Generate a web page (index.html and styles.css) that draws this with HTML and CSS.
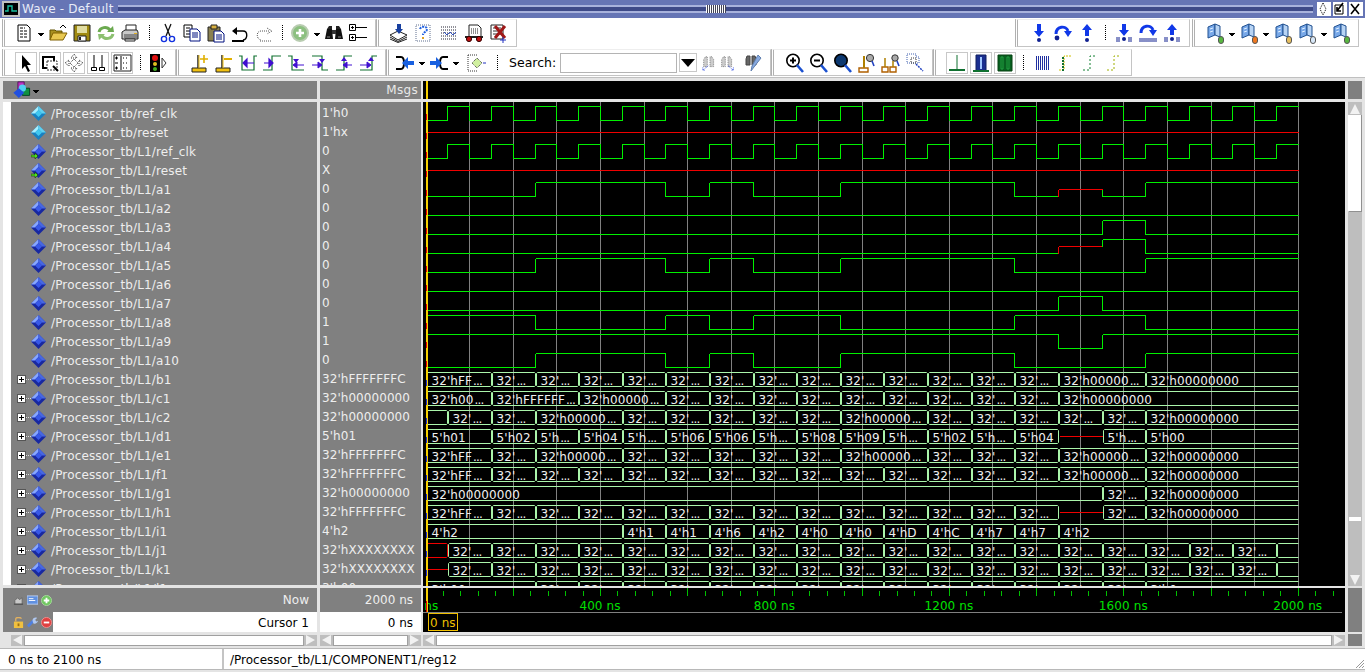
FILE: index.html
```html
<!DOCTYPE html>
<html lang="en">
<head>
    <meta charset="UTF-8">
    <title>Wave - Default</title>
    <link rel="stylesheet" href="styles.css">
</head>
<body>
<svg class="sprites" xmlns="http://www.w3.org/2000/svg">
    <!-- toolbar row 1 -->
    <symbol id="i-new" viewBox="0 0 20 20"><path d="M4 2h9l3 3v13H4z" fill="#fff" stroke="#000"/><path d="M6 5h5M6 8h8M6 11h8M6 14h8" stroke="#000" stroke-dasharray="3 1"/></symbol>
    <symbol id="i-open" viewBox="0 0 20 20"><path d="M2 17V7h5l1 1h6v3" fill="#a89020" stroke="#605000"/><path d="M2 17l3-7h14l-4 7z" fill="#e8c850" stroke="#806000"/><path d="M12 5l3-3 3 3" fill="none" stroke="#000"/></symbol>
    <symbol id="i-save" viewBox="0 0 20 20"><path d="M2 2h16v16H2z" fill="#a08a10" stroke="#222"/><path d="M5 3h10v7H5z" fill="#e0dca0"/><path d="M6 13h8v5H6z" fill="#fff" stroke="#222"/><path d="M7 14h2v3H7z" fill="#222"/></symbol>
    <symbol id="i-reload" viewBox="0 0 20 20"><path d="M3 9c1-5 8-6 11-2" fill="none" stroke="#6caa50" stroke-width="3"/><path d="M11 9l7 0-1-6z" fill="#6caa50"/><path d="M17 11c-1 5-8 6-11 2" fill="none" stroke="#8cc070" stroke-width="3"/><path d="M9 11l-7 0 1 6z" fill="#8cc070"/></symbol>
    <symbol id="i-print" viewBox="0 0 20 20"><path d="M6 2h10v6H6z" fill="#fff" stroke="#222"/><path d="M2 9l3-2h12l1 2v7H2z" fill="#c8c8c8" stroke="#222"/><path d="M4 12h14M4 14h14" stroke="#444"/><path d="M5 16h10v2H5z" fill="#fff" stroke="#222"/><path d="M14 10h3v1h-3z" fill="#e0b020"/></symbol>
    <symbol id="i-cut" viewBox="0 0 20 20"><path d="M7 1l5 12M13 1L8 13" stroke="#111" stroke-width="1.3"/><circle cx="6" cy="16" r="2.6" fill="none" stroke="#1030e0" stroke-width="1.4"/><circle cx="14" cy="16" r="2.6" fill="none" stroke="#1030e0" stroke-width="1.4"/></symbol>
    <symbol id="i-copy" viewBox="0 0 20 20"><path d="M2 2h8v12H2z" fill="#fff" stroke="#000"/><path d="M4 5h4M4 8h4M4 11h4" stroke="#000"/><path d="M8 6h7l3 3v9H8z" fill="#fff" stroke="#001080"/><path d="M10 10h6M10 12h6M10 14h6" stroke="#001080"/></symbol>
    <symbol id="i-paste" viewBox="0 0 20 20"><path d="M2 4h12v14H2z" fill="#8a8050" stroke="#222"/><path d="M5 2h6v4H5z" fill="#d8b040" stroke="#222"/><path d="M8 8h7l3 3v8H8z" fill="#fff" stroke="#001080"/><path d="M10 12h6M10 14h6M10 16h6" stroke="#001080"/></symbol>
    <symbol id="i-undo" viewBox="0 0 20 20"><path d="M5 8h8c5 0 5 8 0 9" fill="none" stroke="#000" stroke-width="1.4"/><path d="M7 4v8L2 8z" fill="#000"/><path d="M2 18h12" stroke="#000" stroke-width="2"/></symbol>
    <symbol id="i-redo" viewBox="0 0 20 20"><path d="M15 8H7c-5 0-5 8 0 9" fill="none" stroke="#555" stroke-dasharray="1 1"/><path d="M13 5l5 3-5 3" fill="none" stroke="#555" stroke-dasharray="1 1"/><path d="M6 18h12" stroke="#555" stroke-dasharray="1 1"/></symbol>
    <symbol id="i-add" viewBox="0 0 20 20"><circle cx="10" cy="10" r="8" fill="#8cc080" stroke="#b8ccb0" stroke-width="2"/><path d="M10 6v8M6 10h8" stroke="#fff" stroke-width="2.6"/></symbol>
    <symbol id="i-binoc" viewBox="0 0 20 20"><path d="M3 6l2-3h3v3zM12 6V3h3l2 3z" fill="#222"/><path d="M1 16l2-10h5l1 10H1zM11 16l1-10h5l2 10h-8z" fill="#111"/><path d="M8 7h4v4H8z" fill="#333"/><path d="M3 14h3M14 14h3" stroke="#888"/></symbol>
    <symbol id="i-tree" viewBox="0 0 20 20"><path d="M1.500 1.500h6v6h-6zM1.500 11.500h6v6h-6z" fill="#fff" stroke="#000"/><path d="M3 4.500h3M4.500 3v3M3 14.500h3M4.500 13v3M8 4.500h11M8 14.500h11" stroke="#000"/></symbol>
    <symbol id="i-load" viewBox="0 0 20 20"><path d="M1 12l8-4 9 4-9 5z" fill="#fff" stroke="#222"/><path d="M1 14l8 4.500 9-4.500M1 16l8 3.500 9-3.500" fill="none" stroke="#222"/><path d="M8 1h4v5h2l-4 5-4-5h2z" fill="#1840a0"/></symbol>
    <symbol id="i-help" viewBox="0 0 20 20"><path d="M2 2h14v16H2z" fill="#fff" stroke="#607090" stroke-dasharray="1 1"/><path d="M6 6c1-3 7-3 7 0 0 3-4 3-4 6" fill="none" stroke="#2060e0" stroke-width="2" stroke-dasharray="2 1"/><path d="M8 14h2v2H8z" fill="#e0a020"/></symbol>
    <symbol id="i-grid" viewBox="0 0 20 20"><path d="M2 4h16M2 7h16M2 10h16M2 13h16M2 16h16" stroke="#223" stroke-dasharray="1 1"/><path d="M5 9l3 3 3-3M11 9l3 3 3-3" fill="none" stroke="#3050c0"/></symbol>
    <symbol id="i-cart" viewBox="0 0 20 20"><path d="M5 2h9l3 3v9H5z" fill="#fff" stroke="#222"/><path d="M7 6h7M7 8h7M7 10h7" stroke="#222" stroke-dasharray="1 1"/><path d="M1 14h18" stroke="#222" stroke-width="2"/><circle cx="5" cy="16" r="2.600" fill="#c01010" stroke="#300"/><circle cx="15" cy="16" r="2.600" fill="#c01010" stroke="#300"/></symbol>
    <symbol id="i-del" viewBox="0 0 20 20"><path d="M2 2h12v14H2z" fill="#fff" stroke="#222"/><path d="M4 5h8M4 8h8M4 11h8" stroke="#333"/><path d="M6 3l10 12M16 3L6 15" stroke="#a01818" stroke-width="3"/><path d="M14 14v6M11 17h6" stroke="#2030c0"/></symbol>
    <!-- step buttons -->
    <symbol id="i-stepin" viewBox="0 0 20 20"><path d="M8 1h4v7h3l-5 6-5-6h3z" fill="#1038e8"/><circle cx="10" cy="17" r="2" fill="#102090"/></symbol>
    <symbol id="i-stepover" viewBox="0 0 20 20"><path d="M3 11C3 3 13 2 15 8" fill="none" stroke="#1038e8" stroke-width="3"/><path d="M11 8h8l-4 6z" fill="#1038e8"/><circle cx="4" cy="15" r="2.400" fill="#102090"/></symbol>
    <symbol id="i-stepout" viewBox="0 0 20 20"><path d="M10 1l5 6h-3v6H8V7H5z" fill="#1038e8"/><circle cx="10" cy="17" r="2" fill="#102090"/></symbol>
    <symbol id="i-stepin2" viewBox="0 0 20 20"><path d="M8 1h4v6h3l-5 6-5-6h3z" fill="#1038e8"/><path d="M3 14v5M5 14v5M15 14v5M17 14v5" stroke="#102090"/><circle cx="10" cy="16" r="2" fill="#102090"/></symbol>
    <symbol id="i-stepover2" viewBox="0 0 20 20"><path d="M3 10C3 2 13 1 15 7" fill="none" stroke="#1038e8" stroke-width="3"/><path d="M11 7h8l-4 6z" fill="#1038e8"/><path d="M2 15v4M4 15v4M6 15v4M8 15v4M10 15v4M12 15v4M14 15v4M16 15v4M18 15v4" stroke="#102090"/></symbol>
    <symbol id="i-stepout2" viewBox="0 0 20 20"><path d="M10 1l5 6h-3v5H8V7H5z" fill="#1038e8"/><path d="M3 14v5M5 14v5M15 14v5M17 14v5" stroke="#102090"/><circle cx="10" cy="16" r="2" fill="#102090"/></symbol>
    <!-- bookmark tools -->
    <symbol id="i-book" viewBox="0 0 20 20"><path d="M3 4l7-3v11l-7 3z" fill="#78a8e8" stroke="#205090"/><path d="M10 1l5 2v11l-5-2z" fill="#b8d4f4" stroke="#205090"/><path d="M5 6l3-1M5 9l3-1" stroke="#e0f0ff"/></symbol>
    <!-- cursor and search row -->
    <symbol id="i-arrow" viewBox="0 0 20 20"><path d="M6 2v14l3-3 3 6 2-1-3-6h4z" fill="#000"/></symbol>
    <symbol id="i-zoombox" viewBox="0 0 20 20"><path d="M3 4h11v11H3z" fill="none" stroke="#000" stroke-width="2"/><path d="M7 8h10v9H7z" fill="#fff" stroke="#333" stroke-dasharray="2 1"/><path d="M13 13l5 5" stroke="#000" stroke-width="2"/></symbol>
    <symbol id="i-move" viewBox="0 0 20 20"><path d="M10 1l3 4h-6zM10 19l3-4H7zM1 10l4-3v6zM19 10l-4-3v6z" fill="#fff" stroke="#333" stroke-dasharray="1 1"/><path d="M10 6l4 4-4 4-4-4z" fill="none" stroke="#333" stroke-dasharray="1 1"/></symbol>
    <symbol id="i-tbars" viewBox="0 0 20 20"><path d="M6 2v12M14 2v12" stroke="#000"/><path d="M3.500 14.500h5v3h-5zM11.500 14.500h5v3h-5z" fill="#fff" stroke="#000"/></symbol>
    <symbol id="i-list" viewBox="0 0 20 20"><path d="M2 2h17v16H2z" fill="#fff" stroke="#222"/><path d="M3 5h3M3 10h3M3 15h3M4.500 3.500v3M4.500 13.500v3" stroke="#000"/><path d="M9 3v14" stroke="#000"/><path d="M11 5h6M11 10h6M11 15h6" stroke="#000" stroke-dasharray="1 2"/></symbol>
    <symbol id="i-stop" viewBox="0 0 20 20"><path d="M2 1h10v18H2z" fill="#000"/><circle cx="7" cy="5" r="3" fill="#e01010"/><circle cx="7" cy="11" r="2" fill="#e0c020"/><circle cx="7" cy="16" r="2" fill="#40b020"/><path d="M14 5l4 5-4 5z" fill="#fff" stroke="#333"/></symbol>
    <symbol id="i-caddn" viewBox="0 0 20 20"><path d="M2 15h14v4H2z" fill="#f0c010" stroke="#222"/><path d="M8 15V2" stroke="#222" stroke-width="1.500"/><path d="M9 2v13" stroke="#f0c010"/><path d="M10 6h8M14 2v8" stroke="#e0b000" stroke-width="1.600"/></symbol>
    <symbol id="i-cdel" viewBox="0 0 20 20"><path d="M2 15h14v4H2z" fill="#f0c010" stroke="#222"/><path d="M8 15V2" stroke="#222" stroke-width="1.500"/><path d="M9 2v13" stroke="#f0c010"/><path d="M10 6h8" stroke="#e0b000" stroke-width="2"/></symbol>
    <symbol id="i-e1" viewBox="0 0 20 20"><path d="M1 3h3v14h12V3h3" fill="none" stroke="#107030" stroke-width="1.200"/><path d="M16 10H9M9 6l-4 4 4 4z" fill="#4010d0" stroke="#4010d0" stroke-width="1.200"/></symbol>
    <symbol id="i-e2" viewBox="0 0 20 20"><path d="M1 17h9V3h9" fill="none" stroke="#107030" stroke-width="1.200"/><path d="M2 10h6M7 6l4 4-4 4z" fill="#4010d0" stroke="#4010d0" stroke-width="1.200"/></symbol>
    <symbol id="i-e3" viewBox="0 0 20 20"><path d="M2 3h4v14h12" fill="none" stroke="#107030" stroke-width="1.200"/><path d="M18 12H9M11 9l-4 3 4 3z" fill="#4010d0" stroke="#4010d0"/><path d="M7 6l3 4 3-4z" fill="#4010d0"/></symbol>
    <symbol id="i-e4" viewBox="0 0 20 20"><path d="M2 3h10v14h6" fill="none" stroke="#107030" stroke-width="1.200"/><path d="M2 12h7M8 9l4 3-4 3z" fill="#4010d0" stroke="#4010d0"/><path d="M9 6l3 4 3-4z" fill="#4010d0"/></symbol>
    <symbol id="i-e5" viewBox="0 0 20 20"><path d="M2 17h8V3h8" fill="none" stroke="#107030" stroke-width="1.200"/><path d="M18 12h-7M13 9l-4 3 4 3z" fill="#4010d0" stroke="#4010d0"/><path d="M7 8l3-4 3 4z" fill="#4010d0"/></symbol>
    <symbol id="i-e6" viewBox="0 0 20 20"><path d="M2 17h12V3h5" fill="none" stroke="#107030" stroke-width="1.200"/><path d="M2 12h8M9 9l4 3-4 3z" fill="#4010d0" stroke="#4010d0"/><path d="M10 8l3-4 3 4z" fill="#4010d0"/></symbol>
    <symbol id="i-out" viewBox="0 0 20 20"><path d="M1 4h5c4 0 4 12 0 12H1" fill="none" stroke="#000" stroke-width="2"/><path d="M19 8h-6V4l-6 6 6 6v-4h6z" fill="#1860e0"/></symbol>
    <symbol id="i-in" viewBox="0 0 20 20"><path d="M19 4h-5c-4 0-4 12 0 12h5" fill="none" stroke="#000" stroke-width="2"/><path d="M1 8h6V4l6 6-6 6v-4H1z" fill="#1860e0"/></symbol>
    <symbol id="i-expand" viewBox="0 0 20 20"><path d="M1 2h9M1 18h9M1 2v16" stroke="#333" stroke-dasharray="1 1" fill="none"/><path d="M10 5l5 5-5 5-5-5z" fill="#d0f0a0" stroke="#333" stroke-dasharray="1 1"/><path d="M16 10h3" stroke="#2030c0"/></symbol>
    <symbol id="i-find1" viewBox="0 0 20 20"><path d="M3 14V6l2-3h2v11zM10 14V3h2l2 3v8z" fill="#ccc" stroke="#777" stroke-dasharray="1 1"/><path d="M8 13l-6 5M2 15v3h3" fill="none" stroke="#2040e0" stroke-dasharray="1 1"/></symbol>
    <symbol id="i-find2" viewBox="0 0 20 20"><path d="M3 14V6l2-3h2v11zM10 14V3h2l2 3v8z" fill="#ccc" stroke="#777" stroke-dasharray="1 1"/><path d="M10 13l6 5M16 15v3h-3" fill="none" stroke="#2040e0" stroke-dasharray="1 1"/></symbol>
    <symbol id="i-findcfg" viewBox="0 0 20 20"><path d="M4 3h3v9H3V6zM9 3h3l1 3v6H9z" fill="#666" stroke="#444"/><path d="M15 2l3 3-7 9-3 4 1-5z" fill="#88aae0" stroke="#6080b0"/></symbol>
    <symbol id="i-zin" viewBox="0 0 20 20"><circle cx="8" cy="7.500" r="6.200" fill="#fff" stroke="#000" stroke-width="1.600"/><path d="M5 7.500h6M8 4.500v6" stroke="#000" stroke-width="2"/><path d="M12 12l6 7" stroke="#1a50d0" stroke-width="2.600"/></symbol>
    <symbol id="i-zout" viewBox="0 0 20 20"><circle cx="8" cy="7.500" r="6.200" fill="#fff" stroke="#000" stroke-width="1.600"/><path d="M5 7.500h6" stroke="#000" stroke-width="2"/><path d="M12 12l6 7" stroke="#1a50d0" stroke-width="2.600"/></symbol>
    <symbol id="i-zfull" viewBox="0 0 20 20"><circle cx="8" cy="7.500" r="6.200" fill="#0c3870" stroke="#000" stroke-width="1.600"/><path d="M12 12l6 7" stroke="#1a50d0" stroke-width="2.600"/></symbol>
    <symbol id="i-zcur" viewBox="0 0 20 20"><circle cx="13" cy="5" r="3.600" fill="#aaa" stroke="#333"/><path d="M15 8l2 5" stroke="#2040c0" stroke-width="1.600"/><path d="M2 15h9v4H2z" fill="#fff" stroke="#b06000" stroke-width="1.400"/><path d="M7 15V3" stroke="#b08000" stroke-width="2"/></symbol>
    <symbol id="i-zcur2" viewBox="0 0 20 20"><circle cx="14" cy="5" r="3.200" fill="#aaa" stroke="#333"/><path d="M16 8l2 5" stroke="#2040c0" stroke-width="1.600"/><path d="M1 14h6v5H1zM9 14h6v5H9z" fill="#fff" stroke="#b06000" stroke-width="1.400"/><path d="M4 14V5M12 14V8" stroke="#b08000" stroke-width="1.500"/></symbol>
    <symbol id="i-zdot" viewBox="0 0 20 20"><path d="M2 1h9v3h3v6H2z" fill="none" stroke="#4060b0" stroke-dasharray="1 1"/><path d="M6 5h5v5H6z" fill="none" stroke="#333" stroke-dasharray="1 1"/><path d="M11 11l7 7" stroke="#2040c0" stroke-dasharray="2 1" stroke-width="1.500"/></symbol>
    <symbol id="i-w1" viewBox="0 0 20 20"><path d="M10 2v15" stroke="#107030"/><path d="M2 17h16" stroke="#107030" stroke-width="2"/></symbol>
    <symbol id="i-w2" viewBox="0 0 20 20"><path d="M5 2h10v16H5z" fill="#1a2f90" stroke="#102060"/><path d="M9 4h2v12H9z" fill="#a0c8ff"/><path d="M2 18h16" stroke="#107030" stroke-width="2"/></symbol>
    <symbol id="i-w3" viewBox="0 0 20 20"><path d="M3 2h14v16H3z" fill="#086020" stroke="#044010"/><path d="M6 4h2v12H6zM12 4h2v12h-2z" fill="none" stroke="#20a040"/></symbol>
    <symbol id="i-w4" viewBox="0 0 20 20"><path d="M3 3h14v14H3z" fill="#2030a0"/><path d="M3 10h14" stroke="#fff" stroke-dasharray="1 1" stroke-width="14"/></symbol>
    <symbol id="i-w5" viewBox="0 0 20 20"><path d="M3 17h5V3h8" fill="none" stroke="#d0c000" stroke-dasharray="2 1"/><path d="M7 4v14" stroke="#107030" stroke-width="2" stroke-dasharray="2 1"/></symbol>
    <symbol id="i-w6" viewBox="0 0 20 20"><path d="M3 17h7V3h7" fill="none" stroke="#108030" stroke-dasharray="2 2"/></symbol>
    <symbol id="i-w7" viewBox="0 0 20 20"><path d="M3 17h7V3h7" fill="none" stroke="#a0b000" stroke-dasharray="2 2"/></symbol>
    <!-- signal list -->
    <symbol id="d-tb" viewBox="0 0 15 15"><path d="M7.500 0L15 7.500 7.500 15 0 7.500z" fill="#1880c0"/><path d="M7.500 0L0 7.500h4L7.500 4z" fill="#a8f0ff"/><path d="M7.500 0L15 7.500h-4L7.500 4z" fill="#60d0f0"/><path d="M7.500 4L11 7.500 7.500 11 4 7.500z" fill="#40c8f0"/></symbol>
    <symbol id="d-sig" viewBox="0 0 15 15"><path d="M7.500 0L15 7.500 7.500 15 0 7.500z" fill="#1828a0"/><path d="M7.500 0L0 7.500h4L7.500 4z" fill="#88a8ff"/><path d="M7.500 0L15 7.500h-4L7.500 4z" fill="#4868e0"/><path d="M7.500 4L11 7.500 7.500 11 4 7.500z" fill="#3858e8"/></symbol>
    <symbol id="d-port" viewBox="0 0 15 15"><path d="M7.500 0L15 7.500 7.500 15 0 7.500z" fill="#1828a0"/><path d="M7.500 0L0 7.500h4L7.500 4z" fill="#88a8ff"/><path d="M7.500 0L15 7.500h-4L7.500 4z" fill="#4868e0"/><path d="M7.500 4L11 7.500 7.500 11 4 7.500z" fill="#3858e8"/><path d="M0 11h4V9l3 3-3 3v-2H0z" fill="#50e020" stroke="#102000" stroke-width=".5"/></symbol>
    <symbol id="i-palette" viewBox="0 0 20 20"><path d="M6 1l7 0 0 7-7 4z" fill="#c030c0" stroke="#501060"/><path d="M11 8h8v8h-8z" fill="#109040" stroke="#004020"/><circle cx="11" cy="8" r="4" fill="#50d0f0"/><path d="M7 8l6 5-6 6-6-6z" fill="#2050e0"/></symbol>
    <symbol id="i-f1" viewBox="0 0 12 12"><path d="M2 10V6l3-3 2 2 3-2v7z" fill="#c8c8c8" stroke="#666"/><path d="M1 10h10" stroke="#444"/></symbol>
    <symbol id="i-f2" viewBox="0 0 12 12"><path d="M0 1h12v9H0z" fill="#6090e0" stroke="#bcd0f0"/><path d="M2 4h5M2 6h7" stroke="#fff"/></symbol>
    <symbol id="i-f3" viewBox="0 0 12 12"><circle cx="6" cy="6" r="5.500" fill="#70c860" stroke="#a8d8a0"/><path d="M6 3v6M3 6h6" stroke="#fff" stroke-width="2"/></symbol>
    <symbol id="i-f4" viewBox="0 0 12 12"><path d="M1 5h10v7H1z" fill="#f0c040"/><path d="M3 5V2c0-2 6-2 6 0" fill="none" stroke="#e0b060" stroke-width="1.500"/><path d="M5 7h2v3H5z" fill="#a07010"/></symbol>
    <symbol id="i-f5" viewBox="0 0 12 12"><path d="M1 10l6-6" stroke="#5080e0" stroke-width="3"/><path d="M6 4c0-3 3-4 5-3L9 3l1 2 2-1c0 2-3 4-5 3z" fill="#b0c8f0"/></symbol>
    <symbol id="i-f6" viewBox="0 0 12 12"><circle cx="6" cy="6" r="5.500" fill="#e04040" stroke="#f09090"/><path d="M3 6h6" stroke="#fff" stroke-width="2"/></symbol>
</svg>

<header class="titlebar">
    <svg class="title-logo" viewBox="0 0 18 16"><path d="M0 0h18v16H0z" fill="#c0c0c0"/><path d="M2 2h14v12H2z" fill="#000"/><path d="M3 10h3V5h4v5h5" fill="none" stroke="#18c0a0" stroke-width="1.400"/></svg>
    <span class="title-text">Wave - Default</span>
    <div class="title-stripes"><i class="title-grip"></i></div>
    <div class="title-buttons">
        <button class="title-btn"><svg viewBox="0 0 12 14"><path d="M6 1l3 6-3 6-3-6z" fill="none" stroke="#000" stroke-dasharray="1 1"/></svg></button>
        <button class="title-btn"><svg viewBox="0 0 12 14"><path d="M2 3h8v9H2z" fill="none" stroke="#000"/><path d="M10 1L4 9M4 5v4h4" fill="none" stroke="#000" stroke-width="1.600"/></svg></button>
        <button class="title-btn"><svg viewBox="0 0 12 14"><path d="M2 2l8 10M10 2L2 12" stroke="#000" stroke-width="1.600"/></svg></button>
    </div>
</header>

<div class="toolbar-row">
    <div class="tb-group pl10">
        <span class="btn"><svg class="ico"><use href="#i-new"/></svg></span><i class="drop"></i>
        <span class="btn"><svg class="ico"><use href="#i-open"/></svg></span>
        <span class="btn"><svg class="ico"><use href="#i-save"/></svg></span>
        <span class="btn"><svg class="ico"><use href="#i-reload"/></svg></span>
        <span class="btn"><svg class="ico"><use href="#i-print"/></svg></span>
        <i class="sep w14"></i>
        <span class="btn"><svg class="ico"><use href="#i-cut"/></svg></span>
        <span class="btn"><svg class="ico"><use href="#i-copy"/></svg></span>
        <span class="btn"><svg class="ico"><use href="#i-paste"/></svg></span>
        <span class="btn"><svg class="ico"><use href="#i-undo"/></svg></span>
        <span class="btn"><svg class="ico"><use href="#i-redo"/></svg></span>
        <i class="sep w12"></i>
        <span class="btn"><svg class="ico"><use href="#i-add"/></svg></span><i class="drop"></i>
        <span class="btn"><svg class="ico"><use href="#i-binoc"/></svg></span>
        <span class="btn"><svg class="ico"><use href="#i-tree"/></svg></span>
    </div>
    <div class="tb-group pl10">
        <span class="btn wide"><svg class="ico"><use href="#i-load"/></svg></span>
        <span class="btn wide"><svg class="ico"><use href="#i-help"/></svg></span>
        <span class="btn wide"><svg class="ico"><use href="#i-grid"/></svg></span>
        <span class="btn wide"><svg class="ico"><use href="#i-cart"/></svg></span>
        <span class="btn wide"><svg class="ico"><use href="#i-del"/></svg></span>
    </div>
    <div class="tb-spacer"></div>
    <div class="tb-group pl12">
        <span class="btn"><svg class="ico"><use href="#i-stepin"/></svg></span>
        <span class="btn"><svg class="ico"><use href="#i-stepover"/></svg></span>
        <span class="btn"><svg class="ico"><use href="#i-stepout"/></svg></span>
        <i class="sep w13"></i>
        <span class="btn"><svg class="ico"><use href="#i-stepin2"/></svg></span>
        <span class="btn"><svg class="ico"><use href="#i-stepover2"/></svg></span>
        <span class="btn"><svg class="ico"><use href="#i-stepout2"/></svg></span>
    </div>
    <div class="tb-group pl11 gap-left">
        <span class="btn"><svg class="ico"><use href="#i-book"/></svg><b class="mark green"></b></span><i class="drop"></i>
        <span class="btn"><svg class="ico"><use href="#i-book"/></svg><b class="mark orange"></b></span><i class="drop"></i>
        <span class="btn"><svg class="ico"><use href="#i-book"/></svg><b class="mark yellow"></b></span>
        <span class="btn"><svg class="ico"><use href="#i-book"/></svg><b class="mark blue"></b></span><i class="drop"></i>
        <span class="btn"><svg class="ico"><use href="#i-book"/></svg><b class="mark green"></b></span>
    </div>
</div>

<div class="toolbar-row">
    <div class="tb-group pl12">
        <span class="btn boxed"><svg class="ico"><use href="#i-arrow"/></svg></span>
        <span class="btn boxed"><svg class="ico"><use href="#i-zoombox"/></svg></span>
        <span class="btn boxed"><svg class="ico"><use href="#i-move"/></svg></span>
        <span class="btn boxed"><svg class="ico"><use href="#i-tbars"/></svg></span>
        <span class="btn boxed"><svg class="ico"><use href="#i-list"/></svg></span>
        <i class="sep w12"></i>
        <span class="btn"><svg class="ico"><use href="#i-stop"/></svg></span>
    </div>
    <div class="tb-group pl12">
        <span class="btn"><svg class="ico"><use href="#i-caddn"/></svg></span>
        <span class="btn"><svg class="ico"><use href="#i-cdel"/></svg></span>
        <span class="btn"><svg class="ico"><use href="#i-e1"/></svg></span>
        <span class="btn"><svg class="ico"><use href="#i-e2"/></svg></span>
        <span class="btn"><svg class="ico"><use href="#i-e3"/></svg></span>
        <span class="btn"><svg class="ico"><use href="#i-e4"/></svg></span>
        <span class="btn"><svg class="ico"><use href="#i-e5"/></svg></span>
        <span class="btn"><svg class="ico"><use href="#i-e6"/></svg></span>
    </div>
    <div class="tb-group pl7">
        <span class="btn"><svg class="ico"><use href="#i-out"/></svg></span><i class="drop"></i>
        <span class="btn"><svg class="ico"><use href="#i-in"/></svg></span><i class="drop"></i>
        <span class="btn ml4"><svg class="ico"><use href="#i-expand"/></svg></span>
        <i class="sep w16"></i>
        <label class="search-label" for="search">Search:</label>
        <input class="search-input" id="search" type="text">
        <span class="search-drop"><i></i></span>
        <span class="btn narrow"><svg class="ico"><use href="#i-find1"/></svg></span>
        <span class="btn narrow"><svg class="ico"><use href="#i-find2"/></svg></span>
        <span class="btn ml4"><svg class="ico"><use href="#i-findcfg"/></svg></span>
    </div>
    <div class="tb-group pl12">
        <span class="btn"><svg class="ico"><use href="#i-zin"/></svg></span>
        <span class="btn"><svg class="ico"><use href="#i-zout"/></svg></span>
        <span class="btn"><svg class="ico"><use href="#i-zfull"/></svg></span>
        <span class="btn"><svg class="ico"><use href="#i-zcur"/></svg></span>
        <span class="btn"><svg class="ico"><use href="#i-zcur2"/></svg></span>
        <span class="btn"><svg class="ico"><use href="#i-zdot"/></svg></span>
    </div>
    <div class="tb-group pl12">
        <span class="btn boxed"><svg class="ico"><use href="#i-w1"/></svg></span>
        <span class="btn boxed"><svg class="ico"><use href="#i-w2"/></svg></span>
        <span class="btn boxed"><svg class="ico"><use href="#i-w3"/></svg></span>
        <i class="sep w13"></i>
        <span class="btn"><svg class="ico"><use href="#i-w4"/></svg></span>
        <span class="btn"><svg class="ico"><use href="#i-w5"/></svg></span>
        <span class="btn"><svg class="ico"><use href="#i-w6"/></svg></span>
        <span class="btn"><svg class="ico"><use href="#i-w7"/></svg></span>
    </div>
</div>

<main class="wave-pane">
    <div class="cell col-names head-names"><svg class="ico palette"><use href="#i-palette"/></svg><i class="drop"></i></div>
    <div class="cell col-values head-msgs">Msgs</div>
    <div class="cell col-wave head-wave"><i class="cursor-line"></i></div>
    <div class="cell vscroll">
        <i class="vs-corner"></i>
        <i class="vs-btn up"></i>
        <i class="vs-thumb"></i>
        <i class="vs-track"><b class="vs-mark"></b></i>
        <i class="vs-btn down"></i>
    </div>

    <div class="cell col-names names" id="names"></div>
    <div class="cell col-values values" id="values"></div>
    <svg class="cell col-wave wave" id="wave" viewBox="423 102 922 484"></svg>

    <div class="cell col-names foot-names">
        <div class="foot-row now">
            <span class="foot-icons"><svg class="tiny"><use href="#i-f1"/></svg><svg class="tiny"><use href="#i-f2"/></svg><svg class="tiny"><use href="#i-f3"/></svg></span>
            <span class="foot-label">Now</span>
        </div>
        <div class="foot-row cur">
            <span class="foot-icons"><svg class="tiny"><use href="#i-f4"/></svg><svg class="tiny"><use href="#i-f5"/></svg><svg class="tiny"><use href="#i-f6"/></svg></span>
            <span class="foot-label white">Cursor 1</span>
        </div>
    </div>
    <div class="cell col-values foot-values">
        <div class="foot-val now">2000 ns</div>
        <div class="foot-val cur">0 ns</div>
    </div>
    <svg class="cell col-wave ruler" id="ruler" viewBox="423 588 922 44"></svg>
    <div class="cell foot-corner"></div>

    <div class="cell col-names scroll s-names"><i class="sb-arrow left"></i><i class="sb-track"></i><i class="sb-arrow right"></i></div>
    <div class="cell col-values scroll s-values"><i class="sb-arrow left"></i><i class="sb-track"></i><i class="sb-arrow right"></i></div>
    <div class="cell col-wave scroll s-wave"><i class="sb-arrow left"></i><i class="sb-track"></i><i class="sb-arrow right"></i></div>
    <div class="cell foot-corner small"></div>
</main>

<footer class="statusbar">
    <div class="status-range">0 ns to 2100 ns</div>
    <div class="status-path">/Processor_tb/L1/COMPONENT1/reg12</div>
    <svg class="grip" viewBox="0 0 10 10"><path d="M9 1L1 9M9 4L4 9M9 7L7 9" stroke="#999"/></svg>
</footer>

<script src="wave.js"></script>
</body>
</html>
```
FILE: styles.css
```css
* {
    box-sizing: border-box;
}
body {
    margin: 0;
    width: 1365px;
    height: 672px;
    overflow: hidden;
    background: #e4e4e4;
    font-family: "DejaVu Sans", sans-serif;
    font-size: 12px;
    color: #000;
}
.sprites {
    position: absolute;
    width: 0;
    height: 0;
}

/* title bar */
.titlebar {
    display: flex;
    align-items: center;
    height: 18px;
    background: #6675b5;
    color: #e8ecf8;
    font-size: 12px;
}
.title-logo {
    flex: none;
    width: 18px;
    height: 16px;
    margin: 0 2px 0 2px;
}
.title-text {
    flex: none;
    width: 96px;
    white-space: nowrap;
    letter-spacing: 0.2px;
}
.title-stripes {
    flex: 1;
    height: 8px;
    border-top: 2px solid #a8b2dc;
    border-bottom: 2px solid #a8b2dc;
    background: #3e4a88;
    background-clip: padding-box;
    display: flex;
    justify-content: center;
}
.title-grip {
    width: 20px;
    height: 8px;
    margin-top: -2px;
    background: repeating-linear-gradient(90deg, #fff 0 1px, #445 1px 2px);
}
.title-buttons {
    display: flex;
    gap: 2px;
    margin: 0 2px 0 4px;
}
.title-btn {
    width: 14px;
    height: 14px;
    padding: 0;
    border: 0;
    background: #fff;
    display: flex;
}

/* toolbars */
.toolbar-row {
    display: flex;
    height: 30px;
    padding: 1px 0 1px 2px;
    background: #fff;
}
.toolbar-row + .toolbar-row {
    border-bottom: 1px solid #c0c0c0;
}
.tb-group {
    display: flex;
    align-items: center;
    flex: none;
    padding-right: 5px;
    border-left: 3px double #b0b0b0;
    border-right: 1px solid #c4c4c4;
    border-bottom: 1px solid #c4c4c4;
    border-top: 1px solid #eee;
}
.tb-spacer {
    flex: 1;
    max-width: 498px;
}
.gap-left {
    margin-left: 2px;
}
.pl7 { padding-left: 4px; }
.pl10 { padding-left: 7px; }
.pl11 { padding-left: 8px; }
.pl12 { padding-left: 9px; }
.ml4 { margin-left: 4px; }
.btn {
    position: relative;
    display: flex;
    align-items: center;
    justify-content: center;
    flex: none;
    width: 24px;
    height: 24px;
}
.btn.wide { width: 25px; }
.btn.narrow { width: 18px; }
.btn.boxed .ico {
    outline: 1px solid #c8c8c8;
}
.ico {
    width: 20px;
    height: 20px;
    display: block;
}
.drop {
    flex: none;
    width: 10px;
    height: 4px;
    margin-top: 3px;
    background: linear-gradient(45deg, transparent 50%, #000 50%) 2px 0/3px 4px no-repeat,
                linear-gradient(-45deg, transparent 50%, #000 50%) 5px 0/3px 4px no-repeat;
}
.sep {
    flex: none;
    height: 16px;
    background: repeating-linear-gradient(180deg, #000 0 1px, transparent 1px 2px) center/1px 100% no-repeat;
}
.w12 { width: 12px; }
.w13 { width: 13px; }
.w14 { width: 14px; }
.w16 { width: 16px; }
.mark {
    position: absolute;
    right: 3px;
    bottom: 1px;
    width: 6px;
    height: 8px;
    border: 1px solid #555;
    border-radius: 3px;
}
.mark.green { background: #58b840; }
.mark.orange { background: #f07820; }
.mark.yellow { background: #e8c060; }
.mark.blue { background: #d8e8f8; }
.search-label {
    width: 55px;
    padding-left: 4px;
    font-size: 12.5px;
}
.search-input {
    width: 117px;
    height: 20px;
    padding: 0;
    border: 1px solid #b4b4b4;
    background: #fff;
}
.search-drop {
    display: flex;
    align-items: center;
    justify-content: center;
    width: 18px;
    height: 19px;
    margin: 0 4px 0 2px;
    border: 1px solid #c8c8c8;
}
.search-drop i {
    border-left: 7px solid transparent;
    border-right: 7px solid transparent;
    border-top: 8px solid #000;
}

/* wave window */
.wave-pane {
    display: grid;
    grid-template-columns: 317px 103px 925px 14px;
    grid-template-rows: 21px 484px 46px 15px;
    margin-top: 3px;
    padding-left: 3px;
    background: #e4e4e4;
}
.cell {
    min-width: 0;
    overflow: hidden;
}
.col-names { margin-right: 3px; }
.col-values { margin-right: 2px; }
.col-wave { margin-right: 3px; }
.head-names,
.head-msgs,
.head-wave {
    height: 18px;
}
.head-names,
.head-msgs {
    background: #808080;
    color: #e8e8e8;
}
.head-names {
    display: flex;
    align-items: center;
    padding-left: 9px;
}
.palette {
    width: 19px;
    height: 18px;
}
.head-msgs {
    text-align: right;
    line-height: 19px;
    padding-right: 3px;
    letter-spacing: 0.3px;
}
.head-wave {
    position: relative;
    background: #000;
}
.cursor-line {
    position: absolute;
    left: 3px;
    top: 0;
    width: 2px;
    height: 100%;
    background: #f8d000;
}
.vscroll {
    display: flex;
    flex-direction: column;
    grid-row: 1 / span 2;
    grid-column: 4;
    height: 505px;
}
.vs-corner {
    flex: none;
    height: 18px;
    margin-bottom: 3px;
    background: #808080;
}
.vs-btn {
    display: block;
    flex: none;
    height: 13px;
    background: #bebebe;
    position: relative;
}
.vs-btn::after {
    content: "";
    position: absolute;
    left: 2px;
    top: 2px;
    border-left: 5px solid transparent;
    border-right: 5px solid transparent;
}
.vs-btn.up::after {
    border-bottom: 10px solid #f2f2f2;
}
.vs-btn.down::after {
    border-top: 10px solid #f2f2f2;
}
.vs-thumb {
    flex: none;
    height: 97px;
    background: #fff;
    border: 1px solid #909090;
    border-left-color: #fff;
    border-top: 0;
}
.vs-track {
    display: block;
    flex: 1;
    background: #bebebe;
    padding: 305px 1px 0;
}
.vs-mark {
    display: block;
    height: 4px;
    background: #fff;
}
.names,
.values {
    background: #808080;
    color: #eee;
    padding-top: 2px;
    height: 483px;
}
.names {
    border-left: 8px solid #fff;
    letter-spacing: 0.14px;
}
.values {
    letter-spacing: 0.06px;
}
.sig-row {
    display: flex;
    align-items: center;
    height: 19px;
    white-space: nowrap;
}
.plus {
    flex: none;
    width: 9px;
    height: 9px;
    margin-left: 6px;
    background: linear-gradient(#000, #000) center/5px 1px no-repeat,
                linear-gradient(#000, #000) center/1px 5px no-repeat,
                #fff;
    border: 1px solid #555;
}
.dots {
    flex: none;
    width: 5px;
    border-top: 1px dotted #ddd;
}
.no-plus {
    flex: none;
    width: 20px;
}
.diamond {
    flex: none;
    width: 15px;
    height: 15px;
    margin-right: 5px;
}
.val-row {
    height: 19px;
    line-height: 19px;
    padding-left: 2px;
    white-space: nowrap;
}
.wave {
    display: block;
    width: 922px;
    height: 484px;
    background: #000;
    font-family: "DejaVu Sans", sans-serif;
    font-size: 12px;
    letter-spacing: 0.1px;
}
.foot-names,
.foot-values {
    padding-top: 2px;
}
.foot-row {
    display: flex;
    align-items: center;
    background: #808080;
    color: #eee;
}
.foot-row.now {
    height: 24px;
}
.foot-row.cur {
    height: 20px;
}
.foot-icons {
    display: flex;
    gap: 3px;
    flex: none;
    width: 50px;
    padding-left: 10px;
}
.tiny {
    flex: none;
    width: 11px;
    height: 11px;
}
.foot-label {
    flex: 1;
    height: 100%;
    line-height: 22px;
    padding-right: 8px;
    text-align: right;
}
.now .foot-label {
    line-height: 24px;
}
.foot-label.white {
    background: #fff;
    color: #000;
}
.foot-val {
    text-align: right;
    padding-right: 8px;
    background: #808080;
    color: #eee;
}
.foot-val.now {
    height: 24px;
    line-height: 24px;
}
.foot-val.cur {
    height: 20px;
    line-height: 22px;
    background: #fff;
    color: #000;
}
.ruler {
    display: block;
    width: 922px;
    height: 44px;
    margin-top: 2px;
    background: #000;
    font-family: "DejaVu Sans", sans-serif;
    font-size: 12px;
    letter-spacing: 0.1px;
}
.foot-corner {
    background: #808080;
    margin-top: 2px;
    height: 44px;
}
.foot-corner.small {
    height: 12px;
}

/* bottom scrollbars */
.scroll {
    display: flex;
    align-items: center;
    padding-top: 3px;
    padding-bottom: 1px;
    height: 15px;
}
.s-names {
    padding-left: 8px;
}
.sb-track {
    flex: 1;
    height: 11px;
    background: #fff;
    border: 1px solid #a0a0a0;
}
.sb-arrow {
    flex: none;
    width: 13px;
    height: 11px;
    background: #bebebe;
    position: relative;
}
.sb-arrow::after {
    content: "";
    position: absolute;
    top: 0;
    border-top: 5px solid transparent;
    border-bottom: 5px solid transparent;
}
.sb-arrow.left::after {
    left: 2px;
    border-right: 9px solid #f2f2f2;
}
.sb-arrow.right::after {
    left: 2px;
    border-left: 9px solid #f2f2f2;
}

/* status bar */
.statusbar {
    position: relative;
    display: flex;
    height: 22px;
    margin-top: 1px;
    background: #fff;
    border-top: 1px solid #b8b8b8;
    border-bottom: 1px solid #b8b8b8;
    line-height: 23px;
}
.status-range {
    width: 224px;
    padding-left: 8px;
    border-right: 2px solid #c4c4c4;
}
.status-path {
    padding-left: 6px;
}
.grip {
    position: absolute;
    right: 0;
    bottom: 0;
    width: 10px;
    height: 10px;
}
```
FILE: wave.js
```js
// waveform data and drawing for the wave pane
const NS = 'http://www.w3.org/2000/svg';
const X0 = 425.55, SCALE = 0.4361, ROW_H = 19;
const GREEN = '#00f000', RED = '#f00000', BUS = '#aaf5aa';

const timeX = t => Math.round(X0 + t * SCALE);
const edgeX = n => (n < 0 ? 427 : n >= 20 ? 1298 : timeX(50 + 100 * n));

function run(from, to, label) {
    const out = [];
    for (let n = from; n <= to; n++) out.push([n, label]);
    return out;
}

const S = "32'...", H5 = "32'h00000...", H8 = "32'h00000000", F = "32'hFF...", D = "5'h...";

// bits: [start level, [edge, level], ...]  levels 0, 1, x
const clock = { clock: true };
const wideA = [0, [2, 1], [5, 0], [6, 1], [7, 0], [9, 1], [13, 0], [16, 1]];
const invA = [1, [2, 0], [5, 1], [6, 0], [7, 1], [9, 0], [13, 1], [16, 0]];

const signals = [
    { name: '/Processor_tb/ref_clk', value: "1'h0", icon: 'd-tb', bits: clock },
    { name: '/Processor_tb/reset', value: "1'hx", icon: 'd-tb', bits: ['x'] },
    { name: '/Processor_tb/L1/ref_clk', value: '0', icon: 'd-port', bits: clock },
    { name: '/Processor_tb/L1/reset', value: 'X', icon: 'd-port', bits: ['x'] },
    { name: '/Processor_tb/L1/a1', value: '0', bits: [0, [2, 1], [5, 0], [6, 1], [7, 0], [9, 1], [13, 0], [14, 'x'], [15, 0], [16, 1]] },
    { name: '/Processor_tb/L1/a2', value: '0', bits: [0] },
    { name: '/Processor_tb/L1/a3', value: '0', bits: [0, [15, 1], [16, 0]] },
    { name: '/Processor_tb/L1/a4', value: '0', bits: [0, [14, 'x'], [15, 1], [16, 0]] },
    { name: '/Processor_tb/L1/a5', value: '0', bits: wideA },
    { name: '/Processor_tb/L1/a6', value: '0', bits: [0] },
    { name: '/Processor_tb/L1/a7', value: '0', bits: [0, [14, 1], [15, 0]] },
    { name: '/Processor_tb/L1/a8', value: '1', bits: invA },
    { name: '/Processor_tb/L1/a9', value: '1', bits: [1, [14, 0], [15, 1]] },
    { name: '/Processor_tb/L1/a10', value: '0', bits: wideA },
    { name: '/Processor_tb/L1/b1', value: "32'hFFFFFFFC", bus: [[-1, F], ...run(1, 13, S), [14, H5], [16, H8]] },
    { name: '/Processor_tb/L1/c1', value: "32'h00000000", bus: [[-1, "32'h00..."], [1, "32'hFFFFFF..."], [3, H5], ...run(5, 13, S), [14, H8]] },
    { name: '/Processor_tb/L1/c2', value: "32'h00000000", bus: [[-1, ''], ...run(0, 1, S), [2, H5], ...run(4, 8, S), [9, H5], ...run(11, 15, S), [16, H8]] },
    { name: '/Processor_tb/L1/d1', value: "5'h01", bus: [[-1, "5'h01"], [1, "5'h02"], [2, D], [3, "5'h04"], [4, D], [5, "5'h06"], [6, "5'h06"], [7, D], [8, "5'h08"], [9, "5'h09"], [10, D], [11, "5'h02"], [12, D], [13, "5'h04"], [14, 'z'], [15, D], [16, "5'h00"]] },
    { name: '/Processor_tb/L1/e1', value: "32'hFFFFFFFC", bus: [[-1, F], [1, S], [2, H5], ...run(4, 8, S), [9, H5], ...run(11, 13, S), [14, H5], [16, H8]] },
    { name: '/Processor_tb/L1/f1', value: "32'hFFFFFFFC", bus: [[-1, F], ...run(1, 13, S), [14, H5], [16, H8]] },
    { name: '/Processor_tb/L1/g1', value: "32'h00000000", bus: [[-1, H8], [15, S], [16, H8]] },
    { name: '/Processor_tb/L1/h1', value: "32'hFFFFFFFC", bus: [[-1, F], ...run(1, 13, S), [14, 'z'], [15, S], [16, H8]] },
    { name: '/Processor_tb/L1/i1', value: "4'h2", bus: [[-1, "4'h2"], [4, "4'h1"], [5, "4'h1"], [6, "4'h6"], [7, "4'h2"], [8, "4'h0"], [9, "4'h0"], [10, "4'hD"], [11, "4'hC"], [12, "4'h7"], [13, "4'h7"], [14, "4'h2"]] },
    { name: '/Processor_tb/L1/j1', value: "32'hXXXXXXXX", bus: [[-1, 'u'], ...run(0, 18, S), [19, '']] },
    { name: '/Processor_tb/L1/k1', value: "32'hXXXXXXXX", bus: [[-1, 'z'], ...run(0, 18, S), [19, '']] },
    { name: '/Processor_tb/L1/l1', value: "3'h00", bus: [[-1, "3'h00"], ...run(2, 15, S), [16, "3'h0"]] }
];

function el(tag, attrs, parent) {
    const e = document.createElementNS(NS, tag);
    for (const k in attrs) e.setAttribute(k, attrs[k]);
    parent.appendChild(e);
    return e;
}

function line(parent, d, color) {
    el('path', { d: d, stroke: color, fill: 'none', 'shape-rendering': 'crispEdges' }, parent);
}

function levelY(level, top) {
    if (level === 1) return top + 0.5;
    if (level === 0) return top + 14.5;
    return top + 7.5;
}

function drawBits(svg, bits, top) {
    if (bits.clock) {
        let d = `M427 ${top + 14.5}`;
        let high = false;
        for (let k = 1; k <= 40; k++) {
            const x = timeX(50 * k) + 0.5;
            d += `H${x}`;
            high = !high;
            if (k < 40) d += `V${top + (high ? 0.5 : 14.5)}`;
        }
        line(svg, d, GREEN);
        return;
    }
    let level = bits[0], x = 427;
    const edges = bits.slice(1).concat([[20, null]]);
    for (const [n, next] of edges) {
        const end = edgeX(n) + 0.5;
        const color = level === 'x' ? RED : GREEN;
        line(svg, `M${x} ${levelY(level, top)}H${end}`, color);
        if (next !== null) {
            line(svg, `M${end} ${levelY(level, top)}V${levelY(next, top)}`, next === 'x' ? RED : GREEN);
        }
        level = next;
        x = end;
    }
}

// the dots of a cut off value sit closer together than the font's own
function busText(svg, label, x, y) {
    const t = el('text', { x: x, y: y, fill: '#f0f0f0' }, svg);
    const cut = label.endsWith('...');
    t.textContent = cut ? label.slice(0, -3) : label;
    if (cut) {
        const dots = el('tspan', { dx: 1, 'letter-spacing': '-0.8' }, t);
        dots.textContent = '...';
    }
}

function drawBus(svg, bus, top) {
    const hi = top + 0.5, lo = top + 14.5, mid = top + 7.5;
    bus.forEach(([n, label], i) => {
        const open = n < 0;
        const last = i === bus.length - 1;
        const x0 = edgeX(n) + (open ? 0.5 : 1.5);
        const x1 = (last ? 1298 : edgeX(bus[i + 1][0])) + 0.5;
        if (label === 'z') {
            line(svg, `M${x0} ${mid}H${x1 + 1}`, RED);
            return;
        }
        const color = label === 'u' ? RED : BUS;
        let d;
        if (open) d = `M${x0} ${hi}H${x1 - 1}L${x1} ${hi + 1}V${lo - 1}L${x1 - 1} ${lo}H${x0}`;
        else if (last) d = `M${x1} ${hi}H${x0 + 1}L${x0} ${hi + 1}V${lo - 1}L${x0 + 1} ${lo}H${x1}`;
        else d = `M${x0 + 1} ${hi}H${x1 - 1}L${x1} ${hi + 1}V${lo - 1}L${x1 - 1} ${lo}H${x0 + 1}L${x0} ${lo - 1}V${hi + 1}Z`;
        el('path', { d: d, stroke: color, fill: 'none' }, svg);
        if (label && label !== 'u') busText(svg, label, x0 + 4, top + 13);
    });
}

function drawWave() {
    const svg = document.getElementById('wave');
    for (let k = 1; k <= 20; k++) {
        const x = timeX(100 * k) + 0.5;
        line(svg, `M${x} 102V586`, '#808080');
    }
    signals.forEach((sig, i) => {
        const top = 106 + ROW_H * i;
        if (sig.bus) drawBus(svg, sig.bus, top);
        else drawBits(svg, sig.bits, top);
    });
    el('rect', { x: 426, y: 102, width: 2, height: 484, fill: '#f8d000' }, svg);
    signals.forEach((sig, i) => {
        const top = 106 + ROW_H * i;
        line(svg, `M426.5 ${top + 8}V${top + 14}`, sig.bus ? '#2030d0' : RED);
    });
}

function drawRuler() {
    const svg = document.getElementById('ruler');
    for (let t = 40; X0 + t * SCALE < 1341; t += 40) {
        const x = timeX(t) + 0.5;
        line(svg, `M${x} ${t % 200 === 0 ? 588 : 591}V596`, '#00c000');
    }
    for (let t = 0; t <= 2000; t += 400) {
        const label = el('text', { x: X0 + t * SCALE, y: 610, fill: '#00e000', 'text-anchor': 'middle' }, svg);
        label.textContent = t + ' ns';
    }
    line(svg, 'M423 612.5H1342', '#808080');
    el('rect', { x: 426, y: 588, width: 2, height: 24, fill: '#f8d000' }, svg);
    line(svg, 'M426.5 601V612', RED);
    el('rect', { x: 428.5, y: 613.5, width: 29, height: 17, fill: 'none', stroke: '#f0c000' }, svg);
    const cur = el('text', { x: 430, y: 627, fill: '#f0c000' }, svg);
    cur.textContent = '0 ns';
}

function drawLists() {
    const names = document.getElementById('names');
    const values = document.getElementById('values');
    signals.forEach(sig => {
        const row = document.createElement('div');
        row.className = 'sig-row';
        const lead = sig.bus ? '<i class="plus"></i><i class="dots"></i>' : '<i class="no-plus"></i>';
        row.innerHTML = lead + `<svg class="diamond"><use href="#${sig.icon || 'd-sig'}"/></svg><span>${sig.name}</span>`;
        names.appendChild(row);
        const val = document.createElement('div');
        val.className = 'val-row';
        val.textContent = sig.value;
        values.appendChild(val);
    });
}

drawLists();
drawWave();
drawRuler();
```
